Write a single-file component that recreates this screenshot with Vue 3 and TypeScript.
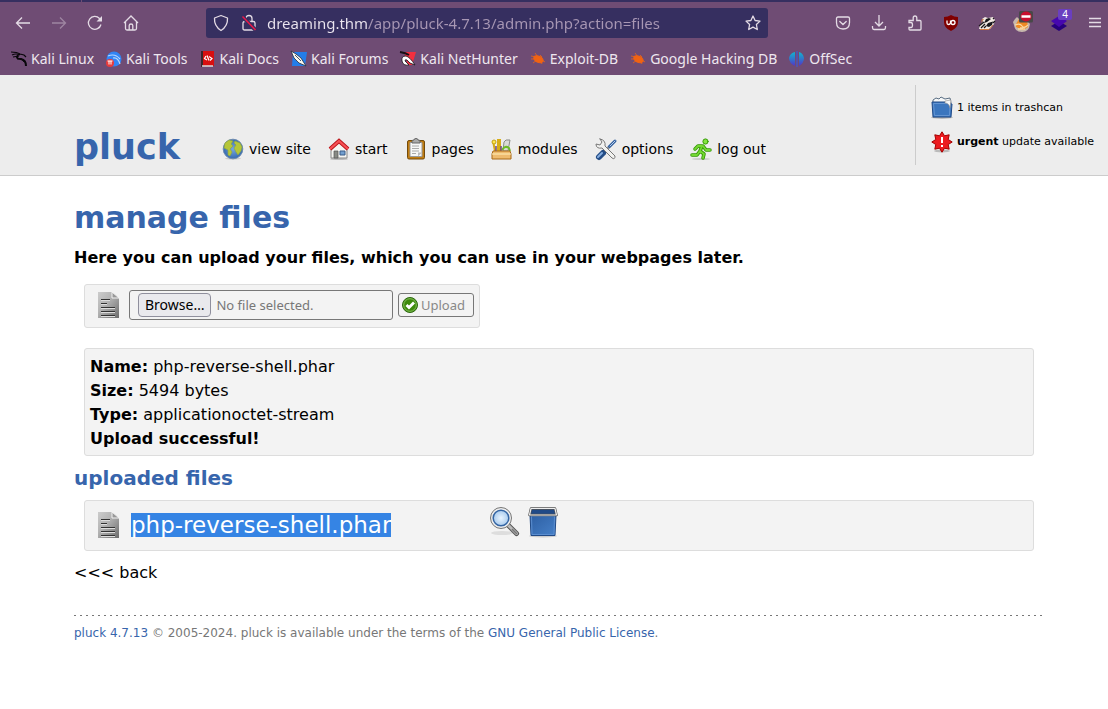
<script setup lang="ts">
import { ref } from 'vue'

interface Item {
  id: string
  label: string
}

const bookmarks: Item[] = [
  { id: 'kali', label: 'Kali Linux' },
  { id: 'tools', label: 'Kali Tools' },
  { id: 'docs', label: 'Kali Docs' },
  { id: 'forums', label: 'Kali Forums' },
  { id: 'nethunter', label: 'Kali NetHunter' },
  { id: 'exploit', label: 'Exploit-DB' },
  { id: 'ghdb', label: 'Google Hacking DB' },
  { id: 'offsec', label: 'OffSec' },
]

const menu: Item[] = [
  { id: 'site', label: 'view site' },
  { id: 'start', label: 'start' },
  { id: 'pages', label: 'pages' },
  { id: 'modules', label: 'modules' },
  { id: 'options', label: 'options' },
  { id: 'logout', label: 'log out' },
]

const details: [string, string][] = [
  ['Name:', 'php-reverse-shell.phar'],
  ['Size:', '5494 bytes'],
  ['Type:', 'applicationoctet-stream'],
]

const address = ref('dreaming.thm/app/pluck-4.7.13/admin.php?action=files')
</script>

<template>
  <div class="browser">
    <div class="tabstrip"></div>
    <div class="toolbar">
      <button class="tool" aria-label="Back">
        <svg width="16" height="16" viewBox="0 0 16 16" class="line"><path d="M15 8H1.500M7 2.500L1.500 8L7 13.500" /></svg>
      </button>
      <button class="tool faded" aria-label="Forward">
        <svg width="16" height="16" viewBox="0 0 16 16" class="line"><path d="M1 8H14.500M9 2.500L14.500 8L9 13.500" /></svg>
      </button>
      <button class="tool" aria-label="Reload">
        <svg width="16" height="16" viewBox="0 0 16 16" class="line"><path d="M14 9.500A6.400 6.400 0 1 1 12.500 3.500L14.500 5.500" /><path d="M15 1V6.500H9.500Z" fill="#e4dbe5" stroke="none" /></svg>
      </button>
      <button class="tool" aria-label="Home">
        <svg width="16" height="16" viewBox="0 0 16 16" class="line"><path d="M1 8L8 1L15 8M2.500 7V13.500Q2.500 15 4 15H12Q13.500 15 13.500 13.500V7M6.200 15V10.500Q6.200 9 8 9Q9.800 9 9.800 10.500V15" /></svg>
      </button>
      <div class="urlbar">
        <svg width="16" height="18" viewBox="0 0 16 18" class="line"><path d="M8 1.500L14.500 4Q15 12 8 16.500Q1 12 1.500 4Z" stroke-linejoin="round" /></svg>
        <svg width="16" height="18" viewBox="0 0 16 18" class="line"><path d="M5 7V4.500Q5 1.500 8 1.500Q11 1.500 11 4.500V7M3.500 7.500H12.500Q14 7.500 14 9V14.500Q14 16 12.500 16H3.500Q2 16 2 14.500V9Q2 7.500 3.500 7.500Z" /><path d="M1.500 2.500L14.500 16" stroke="#362f60" stroke-width="4" /><path d="M1.500 2.500L14.500 16" stroke="#ee1747" stroke-width="1.500" /></svg>
        <input v-model="address" class="address" aria-label="Address" spellcheck="false" />
        <button class="star" aria-label="Bookmark this page">
          <svg width="16" height="16" viewBox="0 0 16 16" class="line"><path d="M8 1L10.100 5.500L15 6.100L11.400 9.500L12.300 14.500L8 12.100L3.700 14.500L4.600 9.500L1 6.100L5.900 5.500Z" stroke-linejoin="round" /></svg>
        </button>
      </div>
      <div class="extensions">
        <button class="tool" aria-label="Save to Pocket">
          <svg width="16" height="16" viewBox="0 0 16 16" class="line"><path d="M3 2H13Q14.500 2 14.500 3.500V7.500Q14.500 14 8 14Q1.500 14 1.500 7.500V3.500Q1.500 2 3 2ZM4.800 6.500L8 9.500L11.200 6.500" stroke-linecap="round" /></svg>
        </button>
        <button class="tool" aria-label="Downloads">
          <svg width="16" height="16" viewBox="0 0 16 16" class="line"><path d="M8 0V11M4 7L8 11L12 7M1.500 11V12.500Q1.500 14.500 3 14.500H13Q14.500 14.500 14.500 12.500V11" /></svg>
        </button>
        <button class="tool" aria-label="Extensions">
          <svg width="16" height="16" viewBox="0 0 16 16" class="line"><path d="M2 7.500V5.500H6.200V3Q6.200 1 8 1Q9.800 1 9.800 3V5.500H13Q14 5.500 14 6.500V14Q14 15 13 15H3Q2 15 2 14V12.500H4Q5.500 12.500 5.500 10T4 7.500Z" /></svg>
        </button>
        <button class="tool" aria-label="uBlock Origin">
          <svg width="16" height="16" viewBox="0 0 16 16"><path d="M8 0Q11 2 15 2V7Q15 13 8 16Q1 13 1 7V2Q5 2 8 0Z" fill="#800000" /><path d="M4 5.500V8Q4 9.500 5.500 9.500T7.500 8V5.500" fill="none" stroke="#fff" stroke-width="1.300" /><circle cx="10" cy="7.500" r="2" fill="none" stroke="#fff" stroke-width="1.300" /></svg>
        </button>
        <button class="tool" aria-label="Privacy Badger">
          <svg width="18" height="16" viewBox="0 0 18 16"><path d="M1 14L2 10L5 7L4 4L7 2L10 3L15 2L17 5L16 9L12 14Z" fill="#f1e9e2" /><path d="M8 4L11 3L13 4L9 7L6 8ZM10 8L15 6.500L14 10L11 12L8 11Z" fill="#17171b" /><path d="M1 11L6 7M3 13L7 9M6 13L8 11M15 4L16 3M15 8L17 6" stroke="#1c191c" stroke-width="1.300" /><path d="M2 14.500H11L15 10" stroke="#d57c40" fill="none" /><path d="M3 8L6 4L4 4Z" fill="#c7834f" /></svg>
        </button>
        <button class="tool" aria-label="FoxyProxy, disabled">
          <svg width="22" height="22" viewBox="0 0 22 22"><path d="M1 10L3 7L5 5L7 7L12 5L18 12Q17 20 10 20Q3 20 2 13Z" fill="#c7b8ad" /><path d="M4 12L7 7L15 8L16 15L11 18L4 15Z" fill="#f08a23" /><path d="M3 13Q8 11 10 14T16 13M6 17H13M8 16H11" stroke="#f9d7a0" stroke-width="1.300" fill="none" /><rect x="7" y="-1" width="14" height="11.500" rx="1.500" fill="#484848" /><ellipse cx="14" cy="4.500" rx="5.500" ry="5" fill="#c8102e" /><path d="M9.500 4.500H18.500" stroke="#fff" stroke-width="2.500" /></svg>
        </button>
        <button class="tool" aria-label="Wappalyzer, 4 technologies">
          <svg width="18" height="18" viewBox="0 0 18 18"><path d="M1 12L9 7L17 12L9 17Z" fill="#26007c" /><path d="M1 7L9 2L17 7L9 13Z" fill="#4608ae" /></svg>
          <span class="count">4</span>
        </button>
        <button class="tool" aria-label="Menu">
          <svg width="14" height="14" viewBox="0 0 14 14" class="line"><path d="M1 2.500H13M1 6.500H13M1 10.500H13" /></svg>
        </button>
      </div>
    </div>
    <nav class="bookmarks" aria-label="Bookmarks">
      <a v-for="b in bookmarks" :key="b.id" href="#">
        <svg width="16" height="16" viewBox="0 0 16 16">
          <g v-if="b.id === 'kali'" fill="none" stroke="#08060a"><path d="M0 1Q6 1 9 3L13 4L15 6M1 4Q5 2 9 4M2 6L8 5" stroke-width="1.200" /><path d="M7 4Q4 8 10 8Q15 9 15 15" stroke-width="2" /><path d="M6 8Q11 7 13 11" /></g>
          <g v-else-if="b.id === 'tools'"><circle cx="8" cy="8" r="7.500" fill="#3285f5" /><path d="M2 5Q9 2 14 8M7 7Q12 6 14 13" stroke="#b8d8ff" stroke-width="1.200" fill="none" /><circle cx="4" cy="12" r="4" fill="#e83b3b" /><path d="M1.500 10H6.500M3 10V13.500M5 10V13.500" stroke="#fff" fill="none" /></g>
          <g v-else-if="b.id === 'docs'"><path d="M2 0H14V15H2Z" fill="#d80f10" /><path d="M1 0H3V16H1Z" fill="#39272b" /><path d="M2 15H13" stroke="#ddd" stroke-width="1.500" /><path d="M6 5L4.500 7.500L7 9M7 4.500L9 9.500M9 5.500L12 7.500L10 9.500" stroke="#fff" stroke-width="1.200" fill="none" /></g>
          <g v-else-if="b.id === 'forums'"><path d="M2 1H16L14 15H1Z" fill="#247de8" /><path d="M0 0L5 3L10 7L15 15L8 12L3 7Z" fill="#f8f8ef" stroke="#242c3a" stroke-width=".8" /><path d="M4 4L10 10" stroke="#42576d" /></g>
          <g v-else-if="b.id === 'nethunter'"><path d="M4 1H16L12 14H8Z" fill="#f22f3e" /><path d="M0 1Q6 2 9 4" stroke="#161116" stroke-width="2" fill="none" /><path d="M2 10Q1 5 6 5Q10 6 15 14L10 12L7 9Q5 8 5 10L9 14Q3 15 2 10Z" fill="#fff" stroke="#171217" stroke-width=".8" /></g>
          <g v-else-if="b.id === 'offsec'"><path d="M6 1V15Q0 12 0 7Q1 2 6 1ZM10 1V15Q15 12 15 7Q14 2 10 1Z" fill="url(#offsec)" /><path d="M8 0V16" stroke="#4b55be" stroke-width="1.500" /></g>
          <g v-else stroke="#f06313" fill="#f06313"><ellipse cx="8.500" cy="8" rx="5" ry="3" transform="rotate(25 8 8)" /><path d="M1 5L6 6M1 8H7M3 12L7 9M5 2L8 6M10 4L12 6M12 13L10 9M15 11L10 8" stroke-width=".8" /></g>
        </svg>
        {{ b.label }}
      </a>
    </nav>
  </div>

  <header class="header">
    <a class="brand" href="#">pluck</a>
    <nav class="menu" aria-label="Administration">
      <a v-for="m in menu" :key="m.id" href="#">
        <svg width="22" height="22" viewBox="0 0 22 22">
          <g v-if="m.id === 'site'"><ellipse cx="11" cy="20.500" rx="8" ry="1.200" fill="#ccc" /><circle cx="11" cy="11" r="9.800" fill="url(#globe)" stroke="#6c8ab0" /><path d="M3 5L7 2L11 3L9 6L11 8L8 11L10 14L8 18L6 17V12L2 10ZM13 3L18 5L20 9L19 13L16 17L14 14L12 10L14 7L12 5Z" fill="#b6c639" stroke="#8da541" stroke-width=".6" /></g>
          <g v-else-if="m.id === 'start'"><ellipse cx="11" cy="21" rx="9" ry="1" fill="#bbb" /><path d="M3 11L11 4L19 11V20H3Z" fill="#f5f5f1" stroke="#888" /><path d="M6 13H10V20H6Z" fill="#888a85" stroke="#555" stroke-width=".7" /><path d="M12 13H17V17H12Z" fill="#729fcf" stroke="#3a5d89" /><path d="M2 11L11 3L20 11" stroke="#b71318" stroke-width="4" fill="none" /><path d="M2 11L11 3L20 11" stroke="#f75054" stroke-width="2.300" fill="none" /></g>
          <g v-else-if="m.id === 'pages'"><rect x="2.500" y="2.500" width="17" height="18.500" rx="1.500" fill="#c17d11" stroke="#744b0c" /><path d="M5 4.500H17V18.500H5Z" fill="#f7f7f7" stroke="#999" /><path d="M7 5V3Q7 2 9 2Q9 .5 11 .5Q13 .5 13 2Q15 2 15 3V5Z" fill="#aaa" stroke="#666" /><path d="M7 8H14M7 10.500H14M7 13H14M7 15.500H11" stroke="#aaa" /><path d="M13 18.500V14.500H17Z" fill="#bbb" /></g>
          <g v-else-if="m.id === 'modules'"><path d="M4 13L2 3M7 13V2H9V13" stroke="#d7ad16" stroke-width="2" fill="none" /><circle cx="3" cy="4" r="2" fill="#fce94f" stroke="#c49f13" /><path d="M12 13L13 4Q14 1 19 2L17 13Z" fill="#dadbd7" stroke="#888a85" /><path d="M11 12Q14 7 18 10L19 13" stroke="#6cbc26" stroke-width="2" fill="none" /><path d="M5 8V13M10 8V13" stroke="#714a7d" stroke-width="1.500" /><path d="M2 13H19L20 16V21H1V16Z" fill="#eebb6e" stroke="#a96917" /><path d="M1 16H20" stroke="#fff0bb" /></g>
          <g v-else-if="m.id === 'options'" stroke-linecap="round"><path d="M20 3L14 9" stroke="#315f9e" stroke-width="3" /><path d="M20 3L15 8" stroke="#b8d0ee" /><path d="M13 10L7 16" stroke="#888" stroke-width="2" /><path d="M8 15L4 19" stroke="#244d86" stroke-width="6" /><path d="M7 15L3 19" stroke="#85ade0" stroke-width="2" /><path d="M5 1L7 4L5 7L1 6Q1 11 7 10L17 20Q20 22 20 18L10 8Q11 2 5 1Z" fill="#f1f1ef" stroke="#777" /></g>
          <g v-else stroke-linecap="round" stroke-linejoin="round"><ellipse cx="11" cy="21" rx="9" ry="1" fill="#ccc" /><path d="M12 8L10 13L14 16L13 20M10 13L7 17H2M12 8H8L5 11M13 8L16 12H20" fill="none" stroke="#329600" stroke-width="3.500" /><path d="M12 8L10 13L14 16L13 20M10 13L7 17H2M12 8H8L5 11M13 8L16 12H20" fill="none" stroke="#73d832" stroke-width="1.800" /><circle cx="15.500" cy="3.500" r="2.600" fill="#82e43f" stroke="#359b04" /></g>
        </svg>
        {{ m.label }}
      </a>
    </nav>
    <aside class="status">
      <a href="#">
        <svg width="22" height="22" viewBox="0 0 22 22"><ellipse cx="11" cy="20.500" rx="11" ry="1.200" fill="#aaa" /><path d="M2 3L5 1L8 2L10 0L14 2L19 1L20 6H2Z" fill="#f5f7f8" stroke="#5a6e83" /><path d="M1 5H15L21 7L20 20H2Z" fill="#3b76be" stroke="#204a87" /><path d="M2.500 6.500H19L18.500 18.500H3.500Z" fill="none" stroke="#6394d2" /><path d="M14 4L20 3L19 11Q18 6 14 6Z" fill="#f4f6f8" stroke="#888" stroke-width=".6" /></svg>
        <span>1 items in trashcan</span>
      </a>
      <a href="#">
        <svg width="22" height="22" viewBox="0 0 22 22"><ellipse cx="11" cy="20" rx="8" ry="1.500" fill="#bbb" /><path d="M11 .8L13.500 4.800L18.200 3.800L17.200 8.500L21.200 11L17.200 13.500L18.200 18.200L13.500 17.200L11 21.200L8.500 17.200L3.800 18.200L4.800 13.500L.8 11L4.800 8.500L3.800 3.800L8.500 4.800Z" fill="#ec1b20" stroke="#a40000" /><path d="M11 6V12M11 14V16" stroke="#fff" stroke-width="2" /></svg>
        <span><b>urgent</b> update available</span>
      </a>
    </aside>
  </header>

  <main class="content">
    <h1>manage files</h1>
    <p class="intro">Here you can upload your files, which you can use in your webpages later.</p>

    <form class="panel upload" @submit.prevent>
      <svg width="26" height="30" viewBox="0 0 26 30"><use href="#document" /></svg>
      <label class="file">
        <input type="file" />
        <span class="browse">Browse…</span>
        <span>No file selected.</span>
      </label>
      <button type="submit" class="submit">
        <svg width="16" height="16" viewBox="0 0 16 16"><circle cx="8" cy="8" r="7.500" fill="#3d8a0c" stroke="#2d6910" /><circle cx="8" cy="8" r="6.300" fill="none" stroke="#83bd59" /><path d="M4.500 8L7 10.500L12 5.500" stroke="#fff" stroke-width="2.800" fill="none" /></svg>
        Upload
      </button>
    </form>

    <section class="panel result">
      <div v-for="[name, value] in details" :key="name"><b>{{ name }}</b> {{ value }}</div>
      <div><b>Upload successful!</b></div>
    </section>

    <h2>uploaded files</h2>
    <div class="panel row">
      <svg width="26" height="30" viewBox="0 0 26 30"><use href="#document" /></svg>
      <span class="name"><mark>php-reverse-shell.phar</mark></span>
      <a href="#" aria-label="View file">
        <svg width="32" height="32" viewBox="0 0 32 32"><ellipse cx="13" cy="27" rx="11" ry="2" fill="#ddd" /><path d="M19 19L27.500 27.500" stroke="#555" stroke-width="5" stroke-linecap="round" /><path d="M19 19L27.500 27.500" stroke="#bbb" stroke-width="3" stroke-linecap="round" /><path d="M23 23L28 28" stroke="#777" stroke-width="1.500" /><circle cx="12" cy="12" r="10.500" fill="#eee" stroke="#777" /><circle cx="12" cy="12" r="7.800" fill="url(#lens)" stroke="#3465a4" stroke-width="1.500" /></svg>
      </a>
      <a href="#" aria-label="Delete file">
        <svg width="32" height="32" viewBox="0 0 32 32"><ellipse cx="16" cy="30" rx="14" ry="1.500" fill="#ccc" /><path d="M3 9H29L28 29.500H4Z" fill="url(#bin)" stroke="#204a87" /><path d="M4.500 10H27.500L27 28.500H5Z" fill="none" stroke="#5b8ed0" /><path d="M4 2.500H28L29.500 9H2.500Z" fill="#204a87" stroke="#555" stroke-width="2.500" stroke-linejoin="round" /><path d="M4 2.500H28L29.500 9H2.500Z" fill="none" stroke="#eee" stroke-width="1.200" stroke-linejoin="round" /></svg>
      </a>
    </div>
    <a class="back" href="#">&lt;&lt;&lt; back</a>

    <footer><a href="#">pluck 4.7.13</a> © 2005-2024. pluck is available under the terms of the <a href="#">GNU General Public License</a>.</footer>
  </main>

  <svg class="defs" aria-hidden="true">
    <defs>
      <linearGradient id="paper" x1="0" y1="0" x2="1" y2="1"><stop stop-color="#ccc" offset="0" /><stop stop-color="#b4b4b4" offset=".4" /><stop stop-color="#6c6c6c" offset="1" /></linearGradient>
      <linearGradient id="offsec" x1="0" y1="0" x2="0" y2="1"><stop stop-color="#10b5ce" offset="0" /><stop stop-color="#5335c8" offset="1" /></linearGradient>
      <linearGradient id="bin" x1="0" y1="0" x2="1" y2="1"><stop stop-color="#2d5fa3" offset="0" /><stop stop-color="#4680c8" offset="1" /></linearGradient>
      <radialGradient id="globe"><stop stop-color="#78a8e0" offset="0" /><stop stop-color="#356ab0" offset="1" /></radialGradient>
      <radialGradient id="lens"><stop stop-color="#e9f4ff" offset="0" /><stop stop-color="#a9cbed" offset="1" /></radialGradient>
      <g id="document"><path d="M3 2H17L24 8V28H3Z" fill="url(#paper)" /><path d="M17 2V8H24Z" fill="#999" stroke="#f3f3f3" /><path d="M6 10.500H15M6 14.500H12M6 18.500H20M6 22.500H20M6 26.500H20" stroke="#ddd" /><path d="M6 9.500H15M6 13.500H12M6 17.500H20M6 21.500H20M6 25.500H20" stroke="#333" /></g>
    </defs>
  </svg>
</template>

<style>
body {
  margin: 0;
  background: #fff;
}
</style>

<style scoped>
* {
  box-sizing: border-box;
}
svg {
  display: block;
  flex: none;
  overflow: visible;
}
a {
  color: inherit;
  text-decoration: none;
}
button {
  padding: 0;
  border: 0;
  background: none;
  color: inherit;
  font: inherit;
}
.defs {
  position: absolute;
  width: 0;
  height: 0;
}
.line {
  fill: none;
  stroke: #e4dbe5;
  stroke-width: 1.3;
}
.browser {
  background: #6f4c74;
  color: #eee7ef;
  font-family: "Noto Sans", sans-serif;
  font-size: 14px;
}
.tabstrip {
  height: 2px;
  background: linear-gradient(90deg, #362f60 81px, #6f4c74 81px, #6f4c74 82px, #362f60 82px);
}
.toolbar {
  display: flex;
  align-items: center;
  height: 42px;
  padding-left: 5px;
}
.tool {
  position: relative;
  display: flex;
  flex: none;
  align-items: center;
  justify-content: center;
  width: 36px;
  height: 36px;
}
.faded {
  opacity: 0.4;
}
.urlbar {
  display: flex;
  flex: 0 1 562px;
  align-items: center;
  gap: 12px;
  height: 30px;
  margin-left: 57px;
  padding: 0 7px;
  border-radius: 3px;
  background: #362f60;
}
.address {
  flex: 1;
  min-width: 0;
  height: 28px;
  margin-left: -2px;
  padding: 0;
  border: 0;
  outline: 0;
  background: linear-gradient(90deg, #ece6f0 101px, #a897b4 101px);
  background-clip: text;
  -webkit-text-fill-color: transparent;
  font: 15px "Noto Sans", sans-serif;
}
.extensions {
  display: flex;
  margin-left: auto;
  margin-right: -5px;
}
.count {
  position: absolute;
  top: 4px;
  right: 5px;
  width: 14px;
  border-radius: 2px;
  background: #6a3fc0;
  color: #fff;
  font-size: 10px;
  line-height: 11px;
}
.bookmarks {
  display: flex;
  align-items: center;
  gap: 12px;
  height: 31px;
  padding: 0 0 2px 11px;
}
.bookmarks a {
  display: flex;
  align-items: center;
  gap: 4px;
  white-space: nowrap;
}
.header {
  display: flex;
  align-items: flex-start;
  height: 101px;
  padding-left: 74px;
  border-bottom: 1px solid #ccc;
  background: #ededed;
  color: #000;
  font-family: "DejaVu Sans", sans-serif;
}
.brand {
  margin-top: 51px;
  color: #3765ac;
  font-size: 35px;
  font-weight: bold;
  line-height: 42px;
}
.menu {
  display: flex;
  gap: 17px;
  margin-top: 62px;
  margin-left: 42px;
  font-size: 14px;
}
.menu a {
  display: flex;
  align-items: center;
  gap: 5px;
  height: 24px;
  white-space: nowrap;
}
.status {
  display: flex;
  flex-direction: column;
  gap: 12px;
  height: 80px;
  margin: 10px 14px 0 auto;
  padding: 12px 0 0 15px;
  border-left: 1px solid #ccc;
  font-size: 11px;
}
.status a {
  display: flex;
  gap: 4px;
  height: 22px;
  line-height: 22px;
  white-space: nowrap;
}
.content {
  padding: 0 64px 0 74px;
  color: #000;
  font: 16px/24px "DejaVu Sans", sans-serif;
}
h1,
h2 {
  margin: 0;
  color: #3765ac;
}
h1 {
  padding-top: 24px;
  font-size: 30px;
  line-height: 36px;
}
.intro {
  margin: 10px 0 14px;
  font-weight: bold;
}
.panel {
  margin: 0 10px;
  border: 1px solid #ddd;
  border-radius: 3px;
  background: #f3f3f3;
}
.upload {
  display: flex;
  align-items: center;
  width: fit-content;
  height: 44px;
  padding: 0 5px 2px 10px;
  font: 13px "Noto Sans", sans-serif;
  color: #777;
}
.file {
  position: relative;
  display: flex;
  align-items: center;
  gap: 5px;
  width: 264px;
  height: 30px;
  margin: 0 5px 0 8px;
  padding-left: 8px;
  border: 1px solid #777;
  border-radius: 3px;
}
.file input {
  position: absolute;
  inset: 0;
  width: 100%;
  opacity: 0;
}
.browse {
  padding: 0 6px;
  border: 1px solid #8f8f9d;
  border-radius: 4px;
  background: #e9e9ed;
  color: #000;
  font-size: 14px;
  line-height: 22px;
}
.submit {
  display: flex;
  align-items: center;
  gap: 3px;
  height: 24px;
  padding: 0 8px 0 3px;
  border: 1px solid #777;
  border-radius: 3px;
  color: #888;
}
.result {
  margin-top: 20px;
  padding: 6px 5px 4px;
}
h2 {
  margin: 10px 0;
  font-size: 20px;
  line-height: 24px;
}
.row {
  display: flex;
  align-items: center;
  height: 51px;
  padding: 0 10px 2px;
}
.row a {
  margin: -6px 6px 0 0;
}
.name {
  width: 358px;
  margin-left: 10px;
  font-size: 23px;
}
mark {
  display: block;
  width: fit-content;
  background: #3584e4;
  color: #fff;
  line-height: 24px;
}
.back {
  display: block;
  width: fit-content;
  margin-top: 10px;
}
footer {
  margin-top: 30px;
  padding-top: 6px;
  background: repeating-linear-gradient(90deg, #777 0, #777 1px, transparent 1px, transparent 2px, transparent 6px) top / 100% 1px no-repeat;
  background: repeating-linear-gradient(90deg, #777 0, #777 2px, transparent 2px, transparent 6px) top / 100% 1px no-repeat;
  color: #777;
  font-size: 12px;
}
footer a {
  color: #3765ac;
}
</style>
